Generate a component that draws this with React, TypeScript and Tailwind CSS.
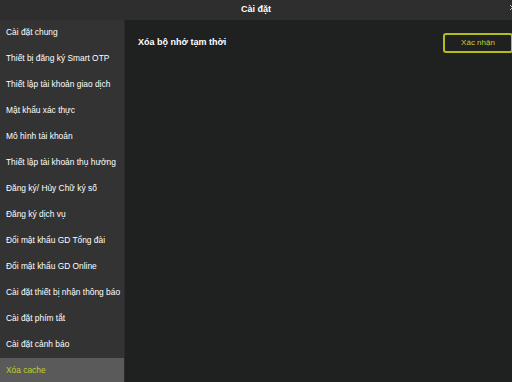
import React from 'react';

const menuItems = [
  'Cài đặt chung',
  'Thiết bị đăng ký Smart OTP',
  'Thiết lập tài khoản giao dịch',
  'Mật khẩu xác thực',
  'Mô hình tài khoản',
  'Thiết lập tài khoản thụ hưởng',
  'Đăng ký/ Hủy Chữ ký số',
  'Đăng ký dịch vụ',
  'Đổi mật khẩu GD Tổng đài',
  'Đổi mật khẩu GD Online',
  'Cài đặt thiết bị nhận thông báo',
  'Cài đặt phím tắt',
  'Cài đặt cảnh báo',
  'Xóa cache',
];

const App = () => {
  const active = 'Xóa cache';

  return (
    <div className="w-[512px] h-[382px] overflow-hidden flex flex-col bg-[#1f2020] font-['Liberation_Sans',Arial,sans-serif]">
      {/* Header */}
      <div className="relative h-[20px] shrink-0 bg-[#2e2e2e] flex items-center justify-center">
        <span className="text-[9px] font-bold text-white">Cài đặt</span>
        {/* close icon, clipped at the window edge */}
        <svg className="absolute right-[-4px] top-[4px]" width="7" height="7" viewBox="0 0 7 7">
          <path d="M1 1L6 6M6 1L1 6" stroke="#bbbbbb" strokeWidth="1" />
        </svg>
      </div>

      <div className="flex flex-1 min-h-0">
        {/* Sidebar */}
        <div className="w-[125px] shrink-0 bg-[#333333] border-r border-[#2a2a2a] flex flex-col">
          {menuItems.map((item) => (
            <div
              key={item}
              className={`h-[26px] shrink-0 flex items-center pl-[6px] pb-[2px] text-[8.4px] whitespace-nowrap ${
                item === active ? 'bg-[#5a5a5a] text-[#c5cf2e]' : 'text-white'
              }`}
            >
              {item}
            </div>
          ))}
        </div>

        {/* Content */}
        <div className="flex-1 flex items-start justify-between pl-[13px] pt-[13px]">
          <h2 className="text-[9px] font-bold text-white mt-[3px]">Xóa bộ nhớ tạm thời</h2>
          <button className="w-[70px] h-[20px] mr-[-1px] border-2 border-[#b4bd1a] rounded-[3px] text-[8px] text-[#c5cf2e] flex items-center justify-center">
            Xác nhận
          </button>
        </div>
      </div>
    </div>
  );
};

export default App;
